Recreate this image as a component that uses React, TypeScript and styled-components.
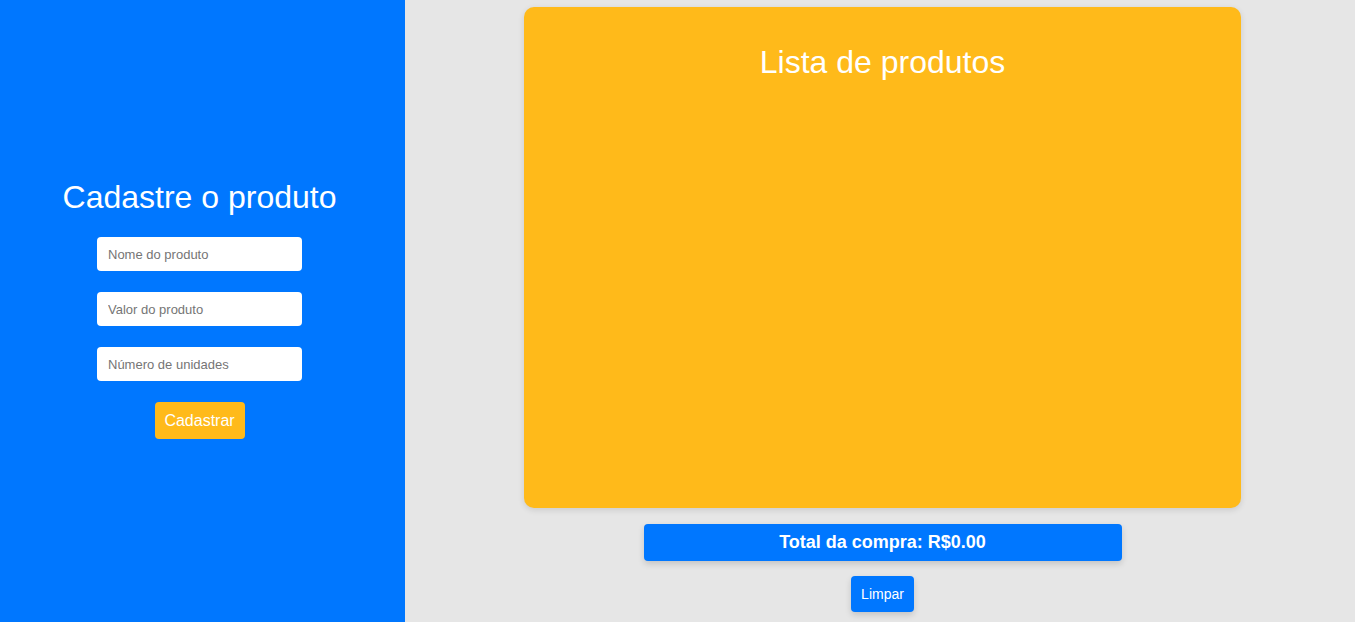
import React, {useState} from "react";
import styled, {createGlobalStyle} from "styled-components";

const GlobalStyle = createGlobalStyle`
    * { box-sizing: border-box; }
    body {
        margin: 0;
        font-family: "Liberation Sans", Arial, sans-serif;
        background: #e6e6e6;
    }
`;

const Page = styled.div`
    display: flex;
    height: 622px;
`;

const Sidebar = styled.aside`
    width: 405px;
    flex-shrink: 0;
    background-color: #0077ff;
    display: flex;
    flex-direction: column;
    align-items: center;
    justify-content: center;
    padding-bottom: 4px;
    padding-right: 6px;
`;

const Title = styled.h1`
    margin: 0;
    font-size: 32px;
    line-height: 37px;
    font-weight: 400;
    color: white;
`;

const Form = styled.form`
    display: flex;
    flex-direction: column;
    align-items: center;
    gap: 21px;
    margin-top: 21px;
`;

const Input = styled.input`
    width: 205px;
    height: 34px;
    border: none;
    border-radius: 4px;
    padding: 0 11px;
    font-family: "Liberation Sans", Arial, sans-serif;
    font-size: 13px;
    outline: none;
    &::placeholder {
        color: #757575;
    }
`;

const YellowButton = styled.button`
    width: 90px;
    height: 37px;
    border: none;
    border-radius: 4px;
    background-color: #ffba1a;
    color: white;
    font-family: "Liberation Sans", Arial, sans-serif;
    font-size: 16px;
    cursor: pointer;
`;

const Main = styled.main`
    flex: 1;
    display: flex;
    flex-direction: column;
    align-items: center;
    padding-top: 7px;
    padding-left: 5px;
`;

const Card = styled.section`
    width: 717px;
    height: 501px;
    background-color: #ffba1a;
    border-radius: 10px;
    box-shadow: 0 2px 6px rgba(0, 0, 0, 0.12);
    padding-top: 37px;
    text-align: center;
`;

const TotalBar = styled.div`
    margin-top: 16px;
    width: 478px;
    height: 37px;
    background-color: #0077ff;
    border-radius: 4px;
    box-shadow: 0 3px 6px rgba(0, 0, 0, 0.15);
    display: flex;
    align-items: center;
    justify-content: center;
    color: white;
    font-size: 18px;
    font-weight: 700;
`;

const ClearButton = styled.button`
    margin-top: 15px;
    width: 63px;
    height: 36px;
    border: none;
    border-radius: 4px;
    background-color: #0077ff;
    color: white;
    font-family: "Liberation Sans", Arial, sans-serif;
    font-size: 14px;
    box-shadow: 0 3px 6px rgba(0, 0, 0, 0.15);
    cursor: pointer;
`;

export default function App() {
    const [total] = useState(0);

    return (
        <>
            <GlobalStyle/>
            <Page>
                <Sidebar>
                    <Title>Cadastre o produto</Title>
                    <Form onSubmit={(e) => e.preventDefault()}>
                        <Input placeholder="Nome do produto"/>
                        <Input placeholder="Valor do produto"/>
                        <Input placeholder="Número de unidades"/>
                        <YellowButton type="submit">Cadastrar</YellowButton>
                    </Form>
                </Sidebar>
                <Main>
                    <Card>
                        <Title>Lista de produtos</Title>
                    </Card>
                    <TotalBar>Total da compra: R${total.toFixed(2)}</TotalBar>
                    <ClearButton>Limpar</ClearButton>
                </Main>
            </Page>
        </>
    );
}
